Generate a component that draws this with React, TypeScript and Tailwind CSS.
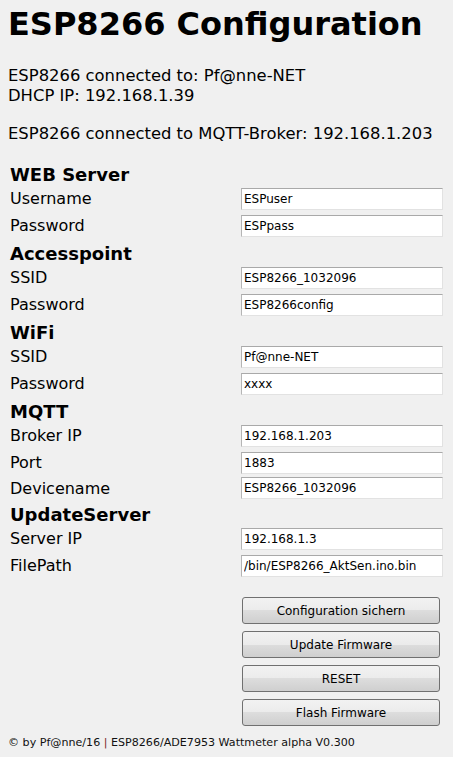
import React from 'react';

type Row = { label: string; value: string; h?: string };
type Section = { title: string; rows: Row[] };

const SECTIONS: Section[] = [
  {
    title: 'WEB Server',
    rows: [
      { label: 'Username', value: 'ESPuser' },
      { label: 'Password', value: 'ESPpass' },
    ],
  },
  {
    title: 'Accesspoint',
    rows: [
      { label: 'SSID', value: 'ESP8266_1032096' },
      { label: 'Password', value: 'ESP8266config' },
    ],
  },
  {
    title: 'WiFi',
    rows: [
      { label: 'SSID', value: 'Pf@nne-NET' },
      { label: 'Password', value: 'xxxx' },
    ],
  },
  {
    title: 'MQTT',
    rows: [
      { label: 'Broker IP', value: '192.168.1.203' },
      { label: 'Port', value: '1883' },
      { label: 'Devicename', value: 'ESP8266_1032096', h: 'h-[24px]' },
    ],
  },
  {
    title: 'UpdateServer',
    rows: [
      { label: 'Server IP', value: '192.168.1.3' },
      { label: 'FilePath', value: '/bin/ESP8266_AktSen.ino.bin' },
    ],
  },
];

const BUTTONS = ['Configuration sichern', 'Update Firmware', 'RESET', 'Flash Firmware'];

const Field = ({ row }: { row: Row }) => (
  <div className={`flex items-center ${row.h ?? 'h-[27px]'}`}>
    <label className="w-[233px] pl-[2px] text-[16px] leading-[19px]">{row.label}</label>
    <input
      defaultValue={row.value}
      className="h-[22px] w-[202px] bg-white border border-t-[#a9a9a9] border-l-[#b5b5b5] border-r-[#e2e2e2] border-b-[#e2e2e2] pl-[2px] text-[12px] text-black outline-none"
    />
  </div>
);

export default function App() {
  return (
    <div className="min-h-screen bg-[#f0f0f0] px-2 text-black font-['DejaVu_Sans',Verdana,sans-serif]">
      <h1 className="pt-[6px] text-[32px] font-bold leading-[37px]">ESP8266 Configuration</h1>

      <div className="mt-[23px] text-[16.4px] leading-[20px]">
        <p>ESP8266 connected to: Pf@nne-NET</p>
        <p>DHCP IP: 192.168.1.39</p>
        <p className="mt-[18px]">ESP8266 connected to MQTT-Broker: 192.168.1.203</p>
      </div>

      <div className="mt-[21px]">
        {SECTIONS.map((s, i) => (
          <div key={s.title} className={i === 0 ? '' : 'mt-[5px]'}>
            <h3 className="h-[20px] pl-[2px] text-[18px] font-bold leading-[20px]">{s.title}</h3>
            {s.rows.map((r) => (
              <Field key={s.title + r.label} row={r} />
            ))}
          </div>
        ))}
      </div>

      <div className="mt-[18px] flex flex-col gap-[7px] pl-[234px]">
        {BUTTONS.map((b) => (
          <button
            key={b}
            className="h-[27px] w-[198px] rounded-[3px] border border-[#707070] bg-[linear-gradient(to_bottom,#f2f2f2_0%,#ebebeb_50%,#dddddd_50%,#cfcfcf_100%)] text-[12px] text-black"
          >
            {b}
          </button>
        ))}
      </div>

      <footer className="mt-[10px] pb-2 text-[11.1px] leading-[14px] text-[#111]">
        © by Pf@nne/16 <span className="text-[#7a1f1f]">|</span> ESP8266/ADE7953 Wattmeter alpha V0.300
      </footer>
    </div>
  );
}
